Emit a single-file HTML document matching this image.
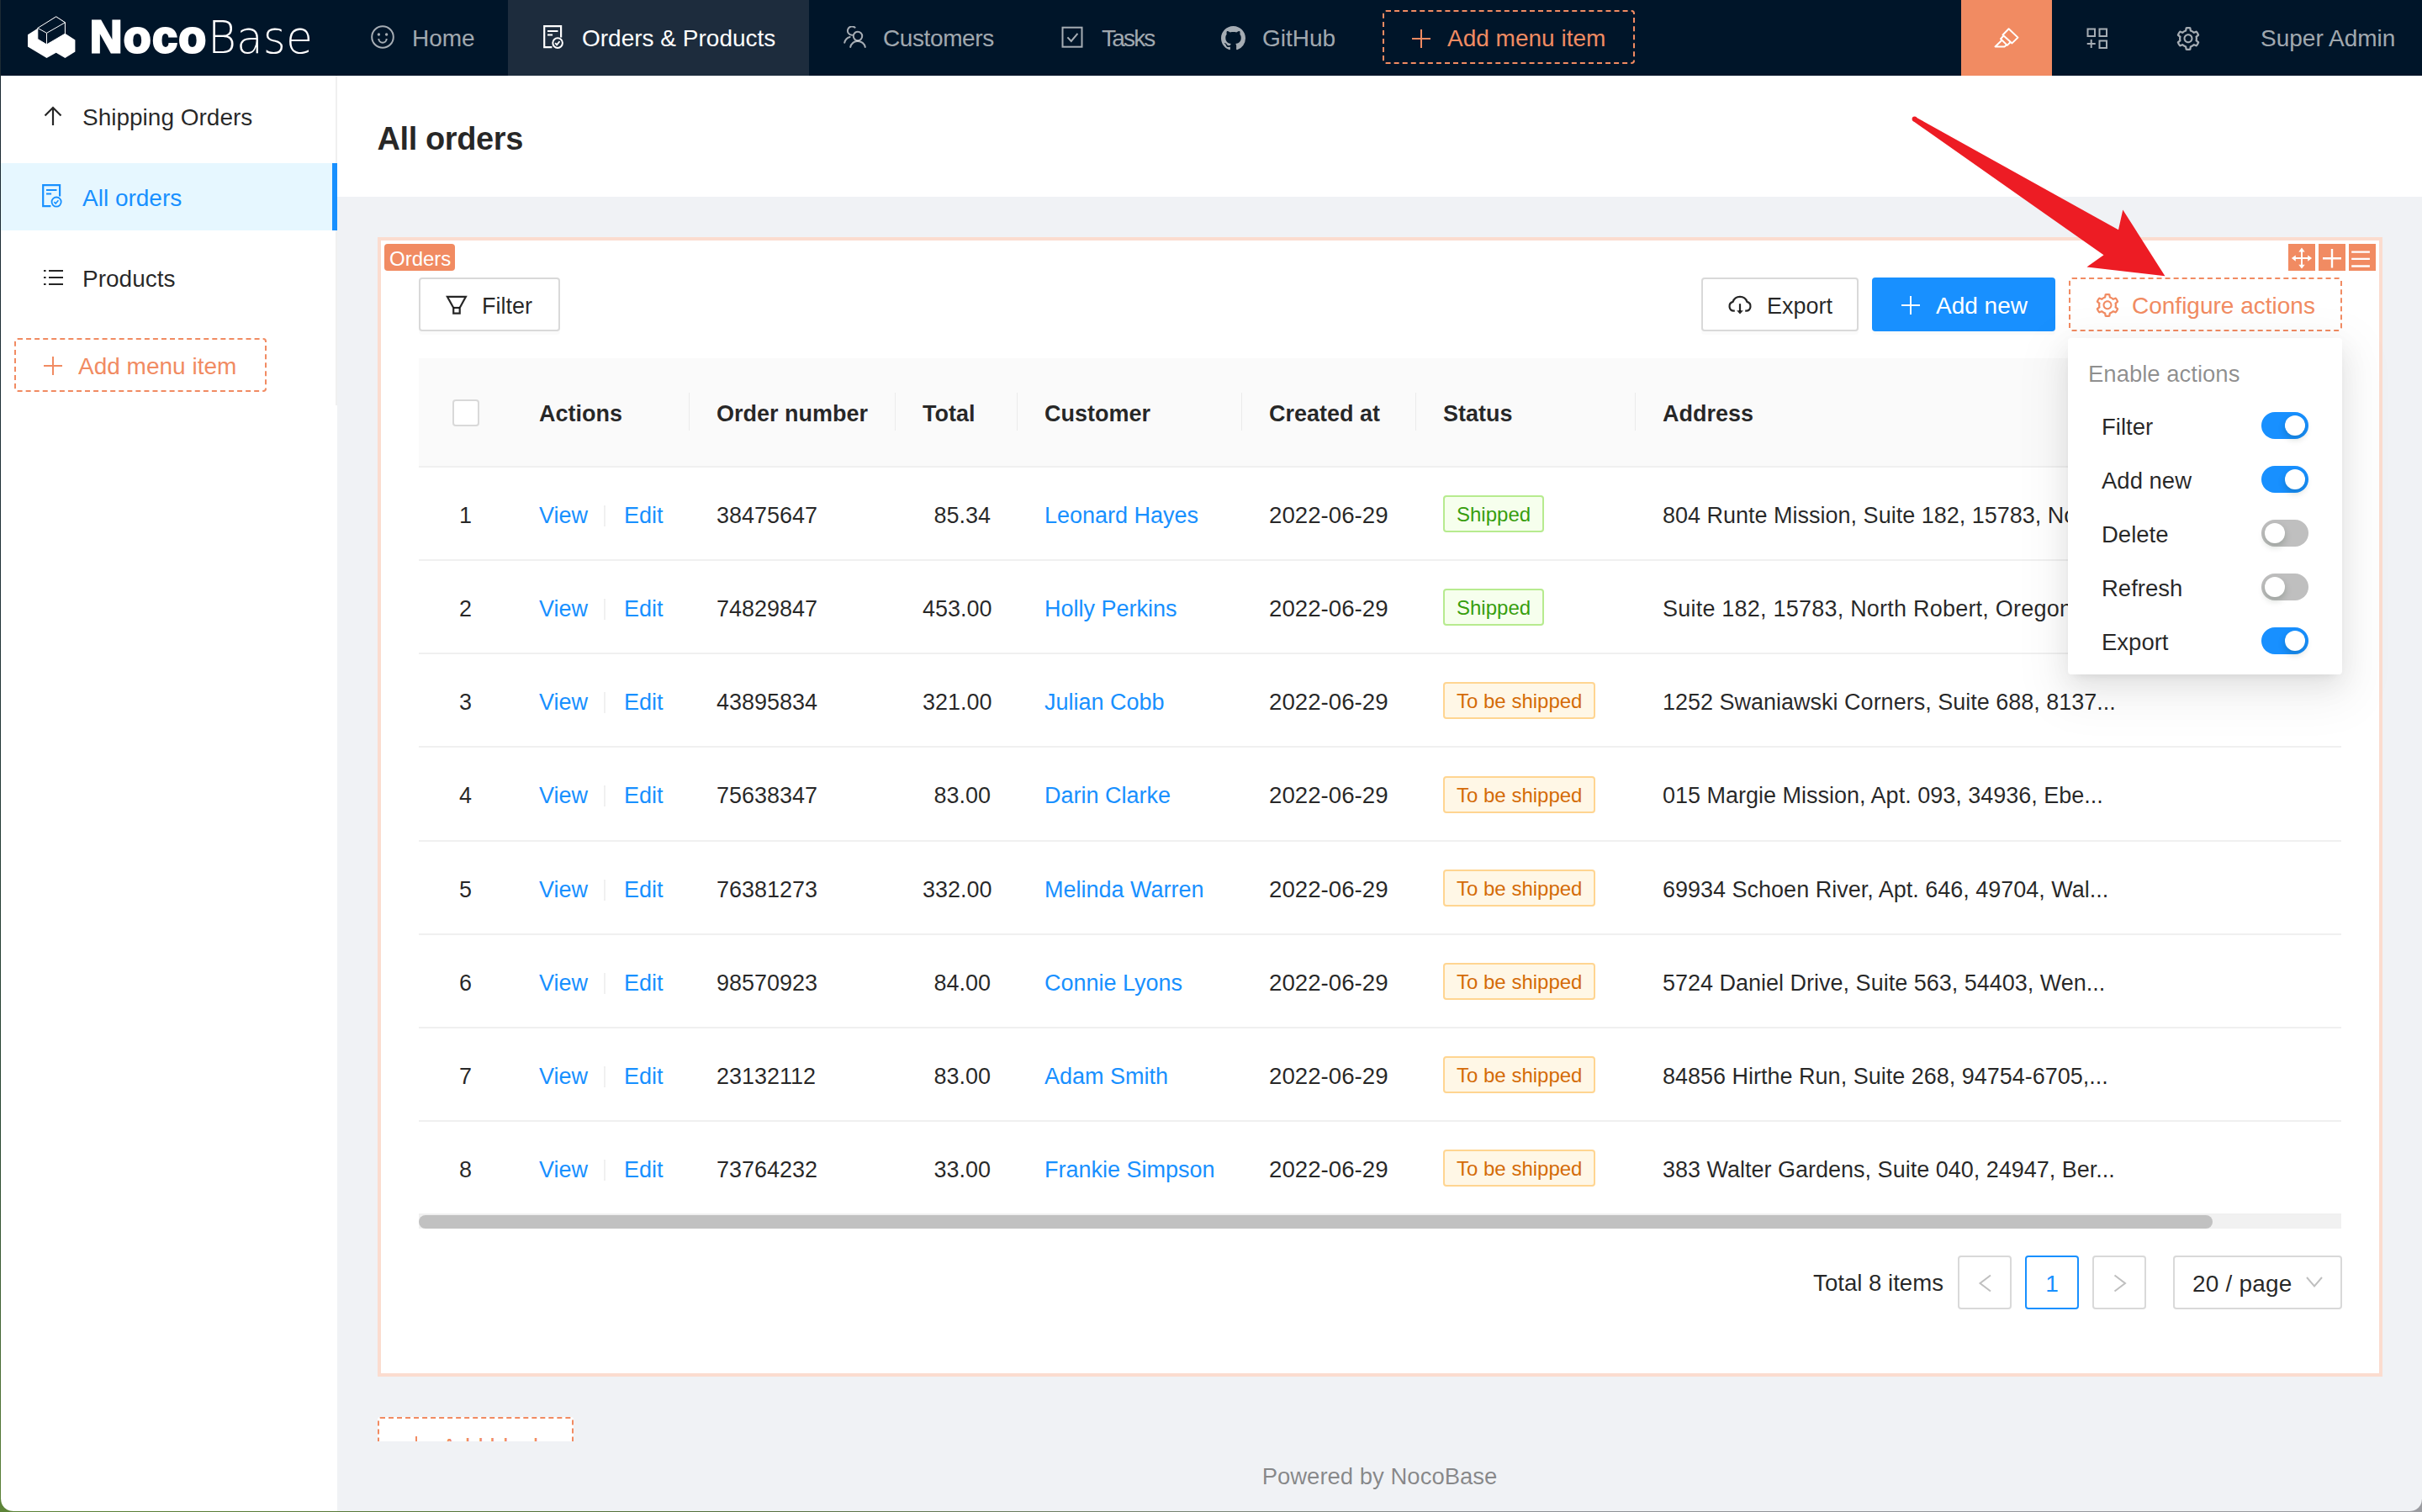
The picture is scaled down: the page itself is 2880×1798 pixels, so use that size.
<!DOCTYPE html>
<html lang="en">
<head>
<meta charset="utf-8">
<title>NocoBase - All orders</title>
<style>
*{box-sizing:border-box;margin:0;padding:0}
html,body{width:2880px;height:1798px;overflow:hidden;background:#f0f2f5}
body{position:relative;font-family:"Liberation Sans",sans-serif;font-size:28px;color:rgba(0,0,0,.85);line-height:44px}
svg{display:block}
.abs{position:absolute}
/* header */
#hdr{position:absolute;left:0;top:0;width:2880px;height:90px;background:#001529;color:rgba(255,255,255,.65)}
#hdr .nav{position:absolute;top:0;height:90px;line-height:92px;white-space:nowrap}
#hdr .nav svg{position:absolute;top:31px}
#hdr .sel{background:#1d2c3d;color:#fff}
.dash{border:2px dashed #f18b62;color:#f18b62;border-radius:4px}
.logo1{left:107px;top:9px;font-size:53px;line-height:70px;font-weight:700;color:#fff;letter-spacing:1.800px;-webkit-text-stroke:3px #fff}
.logo2{left:247px;top:10px;font-size:53px;line-height:70px;color:#fff;font-family:"DejaVu Sans","Liberation Sans",sans-serif;font-weight:200;transform-origin:0 0;transform:scaleX(.98)}
/* sidebar */
#side{position:absolute;left:0;top:90px;width:401px;height:1708px;background:#fff}
#side .bd{position:absolute;left:399px;top:0;width:2px;height:392px;background:#f0f0f0}
#side .it{position:absolute;left:0;width:401px;height:80px;line-height:84px;padding-left:98px;white-space:nowrap}
#side .it svg{position:absolute;left:49px;top:26px}
#side .on{background:#e6f7ff;color:#1890ff;border-right:6px solid #1890ff}
/* page header */
#ph{position:absolute;left:401px;top:90px;width:2479px;height:144px;background:#fff}
#ph h1{position:absolute;left:47.500px;top:42.500px;font-size:38px;line-height:64px;font-weight:700;letter-spacing:-.4px;color:rgba(0,0,0,.85)}
/* card */
#card{position:absolute;left:449px;top:282px;width:2384px;height:1355px;background:#fff;border:4px solid #fbdccf}

/* card inner : coordinates relative to card content box (origin 454,286) */
#card .lbl{position:absolute;left:3px;top:4px;height:32px;line-height:36px;padding:0 5px 0 6px;background:#f18b62;color:#fff;font-size:24px;overflow:hidden;border-radius:4px}
.btn{position:absolute;top:44px;height:64px;line-height:64px;border:2px solid #d9d9d9;border-radius:4px;background:#fff;white-space:nowrap;box-shadow:0 4px 0 rgba(0,0,0,.015)}
.btn svg{position:absolute}
.btn.pri{background:#1890ff;border-color:#1890ff;color:#fff}
.btn.cfg{border:2px dashed #f18b62;color:#f18b62;box-shadow:none}
.tool{position:absolute;top:4px;width:32px;height:32px;background:#f18b62;color:#fff}
#tw{position:absolute;left:44px;top:140px;width:2286px;height:1019px;overflow:hidden}
#tw table{border-collapse:separate;border-spacing:0;table-layout:fixed;width:2460px;font-size:27px}
#tw th{height:130px;background:#fafafa;border-bottom:2px solid #f0f0f0;text-align:left;font-weight:700;font-size:27px;padding:4px 32px 0;position:relative;white-space:nowrap}
#tw th:not(:first-child):not(:last-child)::after{content:"";position:absolute;right:-1px;top:41px;width:2px;height:45px;background:rgba(0,0,0,.06)}
#tw td{height:111px;border-bottom:2px solid #f0f0f0;padding:4px 32px 0;white-space:nowrap;overflow:hidden;background:#fff}
#tw td.c,#tw th.c{text-align:center;padding-left:0;padding-right:0}
#tw td.r{text-align:right}
#tw td.d{font-size:27.700px}
#tw tr:nth-child(4) td{height:112px}
#tw a{color:#1890ff;text-decoration:none}
.vd{display:inline-block;width:2px;height:25px;background:rgba(0,0,0,.06);vertical-align:-4px;margin:0 22px 0 19px}
.cb{display:inline-block;width:32px;height:32px;border:2px solid #d9d9d9;border-radius:4px;background:#fff;vertical-align:middle;position:relative;top:-3px}
.tag{display:inline-block;height:44px;line-height:42px;padding:0 14px;font-size:24px;border:2px solid;border-radius:4px;vertical-align:middle;position:relative;top:-2px}
.tag.g{color:#389e0d;background:#f6ffed;border-color:#b7eb8f}
.tag.o{color:#d46b08;background:#fff7e6;border-color:#ffd591}
#sb{position:absolute;left:44px;top:1159px;width:2286px;height:16px;background:#f1f1f1}
#sb i{position:absolute;left:0;top:0;width:2133px;height:16px;border-radius:8px;background:#c1c1c1}
.pg{position:absolute;top:1207px;height:64px;line-height:62px;border:2px solid #d9d9d9;border-radius:4px;background:#fff;text-align:center}
.pg svg{position:absolute;left:20px;top:18px}

#dd{font-size:27.500px;position:absolute;left:2459px;top:402px;width:326px;height:400px;background:#fff;border-radius:4px;box-shadow:0 6px 12px -8px rgba(0,0,0,.12),0 12px 32px 0 rgba(0,0,0,.08),0 18px 56px 16px rgba(0,0,0,.05)}
#dd .t{position:absolute;left:24px;top:8px;height:64px;line-height:70px;color:rgba(0,0,0,.45)}
#dd .i{position:absolute;left:40px;height:64px;line-height:68px;white-space:nowrap}
.sw{position:absolute;left:230px;width:56px;height:32px;border-radius:16px;background:#bfbfbf}
.sw::after{content:"";position:absolute;left:4px;top:4px;width:24px;height:24px;border-radius:12px;background:#fff;box-shadow:0 4px 8px rgba(0,35,11,.2)}
.sw.on{background:#1890ff}
.sw.on::after{left:28px}
#addb{position:absolute;left:449px;top:1685px;width:233px;height:29px;overflow:hidden}
#addb div{width:233px;height:64px;line-height:67px;border-radius:3px;background:#fff;white-space:nowrap;position:relative}
#ft{position:absolute;left:401px;top:1734px;width:2479px;height:44px;line-height:44px;text-align:center;font-size:27.500px;color:rgba(0,0,0,.45)}
</style>
</head>
<body>
<div id="hdr">
<svg class="abs" style="left:30px;top:16px" width="64" height="58" viewBox="30 16 64 58">
<polygon points="33,41.2 46,33 66.7,19.4 77.8,26.5 77.8,40.1 89.4,47.6 89.4,61.6 77.4,69 66.7,62.8 55.5,69 33,55.4" fill="#fff"/>
<polygon points="44.800,33.400 66.700,19.800 77.400,26.800 77.400,40.100 55.500,52.900 44.800,46.500" fill="#001529" stroke="#fff" stroke-width="1"/>
<path d="M44.800 33.400L55.500 39.300L77.400 26.800M55.500 39.300V52.900" fill="none" stroke="#fff" stroke-width="1"/>
</svg>
<div class="abs logo1">Noco</div><div class="abs logo2">Base</div>
<div class="nav" style="left:400px;width:204px"><svg style="left:41px;top:30px" width="28" height="28" viewBox="0 0 28 28" fill="none" stroke="currentColor" stroke-width="2"><circle cx="14" cy="14" r="12.800"/><path d="M9.300 16a4.700 4.700 0 0 0 9.400 0"/><circle cx="9.400" cy="11" r="1.700" fill="currentColor" stroke="none"/><circle cx="18.600" cy="11" r="1.700" fill="currentColor" stroke="none"/></svg><span style="margin-left:90px">Home</span></div>
<div class="nav sel" style="left:604px;width:358px"><svg style="left:41px;top:29px" width="28" height="31" viewBox="0 0 28 31" fill="none" stroke="currentColor" stroke-width="2.200"><path d="M11.400 27.100H2.200V2.100H22.100V15.400"/><path d="M6 8.100H18.500M6 12.500H12.100" stroke-width="2"/><circle cx="18.100" cy="22.100" r="5.800" stroke-width="2"/><path d="M15.200 22.100l1.900 2.200 3.400-4.200" stroke-width="1.800"/></svg><span style="margin-left:88px">Orders &amp; Products</span></div>
<div class="nav" style="left:962px;width:260px"><svg style="left:41px" width="28" height="28" viewBox="0 0 28 28" fill="none" stroke="currentColor" stroke-width="2" stroke-linecap="round"><circle cx="17" cy="12" r="5.2"/><path d="M8.2 25a9 9 0 0 1 17.6 0"/><path d="M13.600 1.700A5.200 5.200 0 1 0 10.100 10.800"/><path d="M1.200 19.800a9 9 0 0 1 6.400-6.800"/></svg><span style="margin-left:88px;letter-spacing:-.400px">Customers</span></div>
<div class="nav" style="left:1222px;width:190px"><svg style="left:40px" width="28" height="28" viewBox="0 0 28 28" fill="none" stroke="currentColor" stroke-width="2"><rect x="1.500" y="1.700" width="23" height="23"/><path d="M7.400 13.400l4.400 4.600 7.600-9.200"/></svg><span style="margin-left:88px;letter-spacing:-1.800px">Tasks</span></div>
<div class="nav" style="left:1412px;width:216px"><svg style="left:40px" width="29" height="29" viewBox="0 0 16 16" fill="currentColor"><path d="M8 0C3.580 0 0 3.580 0 8c0 3.540 2.290 6.530 5.470 7.590.4.070.55-.17.55-.38 0-.19-.01-.82-.01-1.490-2.010.37-2.530-.49-2.690-.94-.09-.23-.48-.94-.82-1.130-.28-.15-.68-.52-.01-.53.63-.01 1.080.58 1.230.82.720 1.210 1.870.87 2.330.66.070-.52.28-.87.51-1.070-1.780-.2-3.640-.89-3.640-3.950 0-.87.31-1.590.82-2.150-.08-.2-.36-1.020.08-2.120 0 0 .67-.21 2.200.82.640-.18 1.320-.27 2-.27.68 0 1.360.09 2 .27 1.530-1.040 2.200-.82 2.200-.82.440 1.100.160 1.920.08 2.120.51.560.82 1.270.82 2.150 0 3.070-1.870 3.750-3.650 3.950.29.250.54.730.54 1.480 0 1.070-.01 1.930-.01 2.200 0 .21.15.46.55.38A8.013 8.013 0 0 0 16 8c0-4.420-3.580-8-8-8z"/></svg><span style="margin-left:89px">GitHub</span></div>
<div class="abs dash" style="left:1644px;top:12px;width:300px;height:64px;line-height:64px;white-space:nowrap"><svg class="abs" style="left:32px;top:20px" width="24" height="24" viewBox="0 0 24 24" fill="none" stroke="currentColor" stroke-width="2"><path d="M12 1v22M1 12h22"/></svg><span style="margin-left:75px">Add menu item</span></div>
<div class="abs" style="left:2332px;top:0;width:108px;height:90px;background:#f18b62;color:#fff"><svg class="abs" style="left:33px;top:28px" width="40" height="32" viewBox="2365 28 40 32" fill="none" stroke="currentColor" stroke-width="2" stroke-linejoin="round"><path d="M2388.600 34.200L2399.500 44.600L2392.500 51.400L2381.500 41.500Z"/><path d="M2382.500 42.500L2379 46.300L2386.800 53.900L2390.700 50"/><path d="M2380.500 47.800L2372.500 55.400H2383.800L2386 53.200"/></svg></div>
<svg class="abs" style="left:2480px;top:32px" width="28" height="28" viewBox="0 0 28 28" fill="none" stroke="currentColor" stroke-width="2"><rect x="2.500" y="2.500" width="8.500" height="8.500"/><rect x="16.500" y="2.500" width="8.500" height="8.500"/><rect x="16.500" y="16.500" width="8.500" height="8.500"/><path d="M6.700 15v10M1.700 20h10"/></svg>
<svg class="abs" style="left:2586px;top:30px" width="32" height="32" viewBox="0 0 1024 1024" fill="currentColor"><path d="M924.800 625.700l-65.500-56c3.100-19 4.700-38.400 4.700-57.800s-1.600-38.800-4.700-57.800l65.500-56a32.030 32.030 0 0 0 9.300-35.200l-.9-2.600a442.090 442.090 0 0 0-79.700-137.900l-1.800-2.100a32.120 32.120 0 0 0-35.100-9.500l-81.300 28.900c-30-24.600-63.500-44-99.700-57.600l-15.700-85a32.050 32.050 0 0 0-25.800-25.700l-2.700-.5c-52.100-9.400-106.900-9.400-159 0l-2.700.5a32.050 32.050 0 0 0-25.800 25.700l-15.800 85.400a351.860 351.860 0 0 0-99 57.400l-81.900-29.100a32 32 0 0 0-35.100 9.500l-1.800 2.100a446.020 446.020 0 0 0-79.700 137.900l-.9 2.600c-4.500 12.500-.8 26.500 9.300 35.200l66.300 56.600c-3.100 18.800-4.600 38-4.600 57.100 0 19.200 1.500 38.400 4.600 57.100L99 625.500a32.030 32.030 0 0 0-9.300 35.200l.9 2.600c18.100 50.400 44.900 96.900 79.700 137.900l1.800 2.100a32.120 32.120 0 0 0 35.100 9.500l81.900-29.100c29.800 24.500 63.100 43.900 99 57.400l15.800 85.400a32.050 32.050 0 0 0 25.800 25.700l2.700.5a449.400 449.400 0 0 0 159 0l2.700-.5a32.050 32.050 0 0 0 25.800-25.700l15.700-85a350 350 0 0 0 99.700-57.600l81.300 28.900a32 32 0 0 0 35.100-9.500l1.800-2.100c34.800-41.100 61.600-87.500 79.700-137.900l.9-2.600c4.500-12.300.8-26.300-9.300-35zM788.300 465.900c2.500 15.100 3.800 30.600 3.800 46.100s-1.300 31-3.800 46.100l-6.600 40.100 74.700 63.900a370.030 370.030 0 0 1-42.600 73.600L721 702.800l-31.400 25.800c-23.900 19.600-50.500 35-79.300 45.800l-38.100 14.300-17.900 97a377.500 377.500 0 0 1-85 0l-17.900-97.200-37.800-14.500c-28.500-10.800-55-26.200-78.700-45.700l-31.400-25.900-93.400 33.200c-17-22.900-31.200-47.600-42.600-73.600l75.500-64.500-6.500-40c-2.400-14.900-3.700-30.300-3.700-45.500 0-15.300 1.200-30.600 3.700-45.500l6.500-40-75.500-64.500c11.300-26.100 25.600-50.700 42.600-73.600l93.400 33.200 31.400-25.900c23.700-19.500 50.200-34.900 78.700-45.700l37.900-14.300 17.900-97.200c28.100-3.200 56.800-3.200 85 0l17.900 97 38.100 14.300c28.700 10.800 55.400 26.200 79.300 45.800l31.400 25.800 92.800-32.900c17 22.900 31.200 47.600 42.600 73.600L781.800 426l6.500 39.900zM512 326c-97.200 0-176 78.800-176 176s78.800 176 176 176 176-78.800 176-176-78.800-176-176-176zm79.200 255.200A111.600 111.600 0 0 1 512 614c-29.900 0-58-11.700-79.200-32.800A111.600 111.600 0 0 1 400 502c0-29.900 11.700-58 32.800-79.200C454 401.600 482.100 390 512 390c29.900 0 58 11.600 79.200 32.800A111.600 111.600 0 0 1 624 502c0 29.900-11.700 58-32.800 79.200z"/></svg>
<div class="nav" style="left:2688px">Super Admin</div>
</div>
<div id="side"><div class="bd"></div>
<div class="it" style="top:8px"><svg width="28" height="28" viewBox="0 0 28 28" fill="none" stroke="currentColor" stroke-width="2.200"><path d="M14 25V4M4.500 13.500L14 4l9.500 9.500"/></svg>Shipping Orders</div>
<div class="it on" style="top:104px"><svg style="top:24px" width="28" height="31" viewBox="0 0 28 31" fill="none" stroke="currentColor" stroke-width="2.200"><path d="M11.400 27.100H2.200V2.100H22.100V15.400"/><path d="M6 8.100H18.500M6 12.500H12.100" stroke-width="2"/><circle cx="18.100" cy="22.100" r="5.600" stroke-width="1.800"/><path d="M15.400 22.100l1.800 2 3.200-3.800" stroke-width="1.600"/></svg>All orders</div>
<div class="it" style="top:200px"><svg width="28" height="28" viewBox="0 0 28 28" fill="none" stroke="currentColor" stroke-width="2.200"><path d="M9 6h17M9 14h17M9 22h17"/><path d="M3 6h2.600M3 14h2.600M3 22h2.600"/></svg>Products</div>
<div class="abs dash" style="left:17px;top:312px;width:300px;height:64px;line-height:64px;white-space:nowrap"><svg class="abs" style="left:32px;top:19px" width="24" height="24" viewBox="0 0 24 24" fill="none" stroke="currentColor" stroke-width="2"><path d="M12 1v22M1 12h22"/></svg><span style="margin-left:74px">Add menu item</span></div>
</div>
<div id="ph"><h1>All orders</h1></div>
<div id="card"><div class="abs" style="left:1px;top:0;width:0;height:0">
<div class="lbl">Orders</div>
<div class="tool" style="left:2267px"><svg width="32" height="32" viewBox="0 0 32 32" fill="currentColor" stroke="currentColor" stroke-width="2"><path d="M16 8V26.500M7.500 17.100H24.500" fill="none"/><path stroke="none" d="M16 4.600l3.700 4.900h-7.400zM16 29.600l3.700-4.900h-7.400zM3.900 17.100l4.900-3.700v7.400zM28.100 17.100l-4.900-3.700v7.400z"/></svg></div>
<div class="tool" style="left:2303px"><svg width="32" height="32" viewBox="0 0 32 32" fill="none" stroke="currentColor" stroke-width="2.400"><path d="M16 6v22.400M5 17.200h22"/></svg></div>
<div class="tool" style="left:2339px"><svg width="32" height="32" viewBox="0 0 32 32" fill="none" stroke="currentColor" stroke-width="2.400"><path d="M3.200 9.600h21.700M3.200 17.900h21.700M3.200 26.500h21.700"/></svg></div>
<div class="btn" style="left:44px;width:168px;font-size:27px"><svg style="left:26px;top:16px" width="36" height="30" viewBox="526 348 36 30" fill="none" stroke="currentColor" stroke-width="2.200" stroke-linejoin="miter"><path d="M531.900 352.800H553.900L546.700 366V372.700H539.200V366Z"/><path d="M539.200 366H546.700"/></svg><span style="margin-left:73px">Filter</span></div>
<div class="btn" style="left:1569px;width:187px;font-size:27px"><svg style="left:25px;top:16px" width="40" height="30" viewBox="2050 348 40 30" fill="none" stroke="currentColor" stroke-width="2.200" stroke-linecap="butt"><path d="M2062.800 369.700H2061.700A5.500 5.500 0 0 1 2060.600 358.900A8.900 8.900 0 0 1 2077.400 358.900A5.500 5.500 0 0 1 2076.300 369.700H2075.200"/><path d="M2069 361.200V370"/><path d="M2065.200 369.200H2072.800L2069 373.600Z" fill="currentColor" stroke="none"/></svg><span style="margin-left:76px">Export</span></div>
<div class="btn pri" style="left:1772px;width:218px"><svg style="left:33px;top:20px" width="22" height="22" viewBox="0 0 22 22" fill="none" stroke="currentColor" stroke-width="2"><path d="M11 0v22M0 11h22"/></svg><span style="margin-left:74px">Add new</span></div>
<div class="btn cfg" style="left:2006px;width:325px"><svg style="left:28px;top:15px" width="32" height="32" viewBox="0 0 1024 1024" fill="currentColor"><path d="M924.800 625.700l-65.500-56c3.100-19 4.700-38.400 4.700-57.800s-1.600-38.800-4.700-57.800l65.500-56a32.030 32.030 0 0 0 9.300-35.200l-.9-2.600a442.090 442.090 0 0 0-79.700-137.900l-1.800-2.100a32.120 32.120 0 0 0-35.100-9.500l-81.300 28.900c-30-24.600-63.500-44-99.700-57.600l-15.700-85a32.050 32.050 0 0 0-25.800-25.700l-2.700-.5c-52.100-9.400-106.900-9.400-159 0l-2.700.5a32.050 32.050 0 0 0-25.800 25.700l-15.800 85.400a351.860 351.860 0 0 0-99 57.400l-81.900-29.100a32 32 0 0 0-35.100 9.500l-1.800 2.100a446.020 446.020 0 0 0-79.700 137.900l-.9 2.600c-4.500 12.500-.8 26.500 9.300 35.200l66.300 56.600c-3.100 18.800-4.600 38-4.600 57.100 0 19.200 1.500 38.400 4.600 57.100L99 625.500a32.030 32.030 0 0 0-9.300 35.200l.9 2.600c18.100 50.400 44.900 96.900 79.700 137.900l1.800 2.100a32.120 32.120 0 0 0 35.100 9.500l81.900-29.100c29.800 24.500 63.100 43.900 99 57.400l15.800 85.400a32.050 32.050 0 0 0 25.800 25.700l2.700.5a449.400 449.400 0 0 0 159 0l2.700-.5a32.050 32.050 0 0 0 25.800-25.700l15.700-85a350 350 0 0 0 99.700-57.600l81.300 28.900a32 32 0 0 0 35.100-9.500l1.800-2.100c34.800-41.100 61.600-87.500 79.700-137.900l.9-2.600c4.500-12.300.8-26.300-9.300-35zM788.300 465.900c2.500 15.100 3.800 30.600 3.800 46.100s-1.300 31-3.800 46.100l-6.600 40.100 74.700 63.900a370.030 370.030 0 0 1-42.600 73.600L721 702.800l-31.400 25.800c-23.900 19.600-50.500 35-79.300 45.800l-38.100 14.300-17.900 97a377.500 377.500 0 0 1-85 0l-17.900-97.200-37.800-14.500c-28.500-10.800-55-26.200-78.700-45.700l-31.400-25.900-93.400 33.200c-17-22.900-31.200-47.600-42.600-73.600l75.500-64.500-6.500-40c-2.400-14.900-3.700-30.300-3.700-45.500 0-15.300 1.200-30.600 3.700-45.500l6.500-40-75.500-64.500c11.300-26.100 25.600-50.700 42.600-73.600l93.400 33.200 31.400-25.900c23.700-19.500 50.200-34.900 78.700-45.700l37.900-14.300 17.900-97.200c28.100-3.200 56.800-3.200 85 0l17.900 97 38.100 14.300c28.700 10.800 55.400 26.200 79.300 45.800l31.400 25.800 92.800-32.900c17 22.900 31.200 47.600 42.600 73.600L781.800 426l6.500 39.900zM512 326c-97.200 0-176 78.800-176 176s78.800 176 176 176 176-78.800 176-176-78.800-176-176-176zm79.200 255.200A111.600 111.600 0 0 1 512 614c-29.900 0-58-11.700-79.200-32.800A111.600 111.600 0 0 1 400 502c0-29.900 11.700-58 32.800-79.200C454 401.600 482.100 390 512 390c29.900 0 58 11.600 79.200 32.800A111.600 111.600 0 0 1 624 502c0 29.900-11.700 58-32.800 79.200z"/></svg><span style="margin-left:73px">Configure actions</span></div>
<div id="tw"><table><colgroup><col style="width:111px"><col style="width:211px"><col style="width:245px"><col style="width:145px"><col style="width:267px"><col style="width:207px"><col style="width:261px"><col style="width:600px"><col></colgroup>
<thead><tr><th class="c"><span class="cb"></span></th><th>Actions</th><th>Order number</th><th>Total</th><th>Customer</th><th>Created at</th><th>Status</th><th>Address</th><th></th></tr></thead>
<tbody>
<tr><td class="c">1</td><td><a>View</a><span class="vd"></span><a>Edit</a></td><td>38475647</td><td class="r">85.34</td><td><a>Leonard Hayes</a></td><td class="d">2022-06-29</td><td><span class="tag g">Shipped</span></td><td>804 Runte Mission, Suite 182, 15783, North Robert...</td><td></td></tr>
<tr><td class="c">2</td><td><a>View</a><span class="vd"></span><a>Edit</a></td><td>74829847</td><td class="r">453.00</td><td><a>Holly Perkins</a></td><td class="d">2022-06-29</td><td><span class="tag g">Shipped</span></td><td style="letter-spacing:.220px">Suite 182, 15783, North Robert, Oregon, 84856...</td><td></td></tr>
<tr><td class="c">3</td><td><a>View</a><span class="vd"></span><a>Edit</a></td><td>43895834</td><td class="r">321.00</td><td><a>Julian Cobb</a></td><td class="d">2022-06-29</td><td><span class="tag o">To be shipped</span></td><td>1252 Swaniawski Corners, Suite 688, 8137...</td><td></td></tr>
<tr><td class="c">4</td><td><a>View</a><span class="vd"></span><a>Edit</a></td><td>75638347</td><td class="r">83.00</td><td><a>Darin Clarke</a></td><td class="d">2022-06-29</td><td><span class="tag o">To be shipped</span></td><td>015 Margie Mission, Apt. 093, 34936, Ebe...</td><td></td></tr>
<tr><td class="c">5</td><td><a>View</a><span class="vd"></span><a>Edit</a></td><td>76381273</td><td class="r">332.00</td><td><a>Melinda Warren</a></td><td class="d">2022-06-29</td><td><span class="tag o">To be shipped</span></td><td>69934 Schoen River, Apt. 646, 49704, Wal...</td><td></td></tr>
<tr><td class="c">6</td><td><a>View</a><span class="vd"></span><a>Edit</a></td><td>98570923</td><td class="r">84.00</td><td><a>Connie Lyons</a></td><td class="d">2022-06-29</td><td><span class="tag o">To be shipped</span></td><td>5724 Daniel Drive, Suite 563, 54403, Wen...</td><td></td></tr>
<tr><td class="c">7</td><td><a>View</a><span class="vd"></span><a>Edit</a></td><td>23132112</td><td class="r">83.00</td><td><a>Adam Smith</a></td><td class="d">2022-06-29</td><td><span class="tag o">To be shipped</span></td><td>84856 Hirthe Run, Suite 268, 94754-6705,...</td><td></td></tr>
<tr><td class="c">8</td><td><a>View</a><span class="vd"></span><a>Edit</a></td><td>73764232</td><td class="r">33.00</td><td><a>Frankie Simpson</a></td><td class="d">2022-06-29</td><td><span class="tag o">To be shipped</span></td><td>383 Walter Gardens, Suite 040, 24947, Ber...</td><td></td></tr>
</tbody></table></div>
<div id="sb"><i></i></div>
<div class="abs" style="left:1597px;top:1207px;width:260px;height:64px;line-height:66px;text-align:right;white-space:nowrap;font-size:27.600px">Total 8 items</div>
<div class="pg" style="left:1874px;width:64px"><svg width="22" height="24" viewBox="0 0 22 24" fill="none" stroke="#bfbfbf" stroke-width="2"><path d="M17 3.500L4.500 13l12.500 9.500"/></svg></div>
<div class="pg" style="left:1954px;width:64px;border-color:#1890ff;color:#1890ff;line-height:64px">1</div>
<div class="pg" style="left:2034px;width:64px"><svg width="22" height="24" viewBox="0 0 22 24" fill="none" stroke="#bfbfbf" stroke-width="2"><path d="M4.500 3.500L17 13 4.500 22.500"/></svg></div>
<div class="pg" style="left:2130px;width:201px;text-align:left;padding-left:21px;line-height:64px;letter-spacing:.200px">20 / page<svg style="left:155px;top:20px" width="24" height="20" viewBox="0 0 24 20" fill="none" stroke="#bfbfbf" stroke-width="2"><path d="M2 4l9 10.500L20 4"/></svg></div>
</div></div>

<div id="addb"><div class="dash"><svg class="abs" style="left:32px;top:20px" width="24" height="24" viewBox="0 0 24 24" fill="none" stroke="currentColor" stroke-width="2"><path d="M12 1v22M1 12h22"/></svg><span style="margin-left:74px">Add block</span></div></div>
<div id="ft">Powered by NocoBase</div>
<div id="dd"><div class="t">Enable actions</div><div class="i" style="top:72px">Filter</div><span class="sw on" style="top:88px"></span><div class="i" style="top:136px">Add new</div><span class="sw on" style="top:152px"></span><div class="i" style="top:200px">Delete</div><span class="sw" style="top:216px"></span><div class="i" style="top:264px">Refresh</div><span class="sw" style="top:280px"></span><div class="i" style="top:328px">Export</div><span class="sw on" style="top:344px"></span></div>
<svg class="abs" style="left:2260px;top:125px" width="330" height="215" viewBox="2260 125 330 215"><path d="M2277.500 139L2519 273.300L2524.300 249.500L2574.400 328.300L2481.400 317.600L2501.500 303.300L2274.600 143.800Z" fill="#ed1c24"/><circle cx="2276.600" cy="141.600" r="3" fill="#ed1c24"/></svg>

<div class="abs" style="left:0;top:0;width:1px;height:1798px;background:linear-gradient(180deg,#1c2a33 0,#22343a 40%,#2c4a34 75%,#5d8438 100%)"></div>
<div class="abs" style="left:0;top:1797px;width:2880px;height:1px;background:linear-gradient(90deg,#5d8438 0,#55703c 30%,#8d9094 60%,#9b9ca1 100%)"></div>
<div class="abs" style="left:1px;top:1783px;width:14px;height:14px;background:radial-gradient(circle at 100% 0,rgba(93,132,56,0) 13.300px,#5d8438 14.300px)"></div>
<div class="abs" style="left:2866px;top:1783px;width:14px;height:14px;background:radial-gradient(circle at 0 0,rgba(155,156,161,0) 13.300px,#9b9ca1 14.300px)"></div>
</body>
</html>
